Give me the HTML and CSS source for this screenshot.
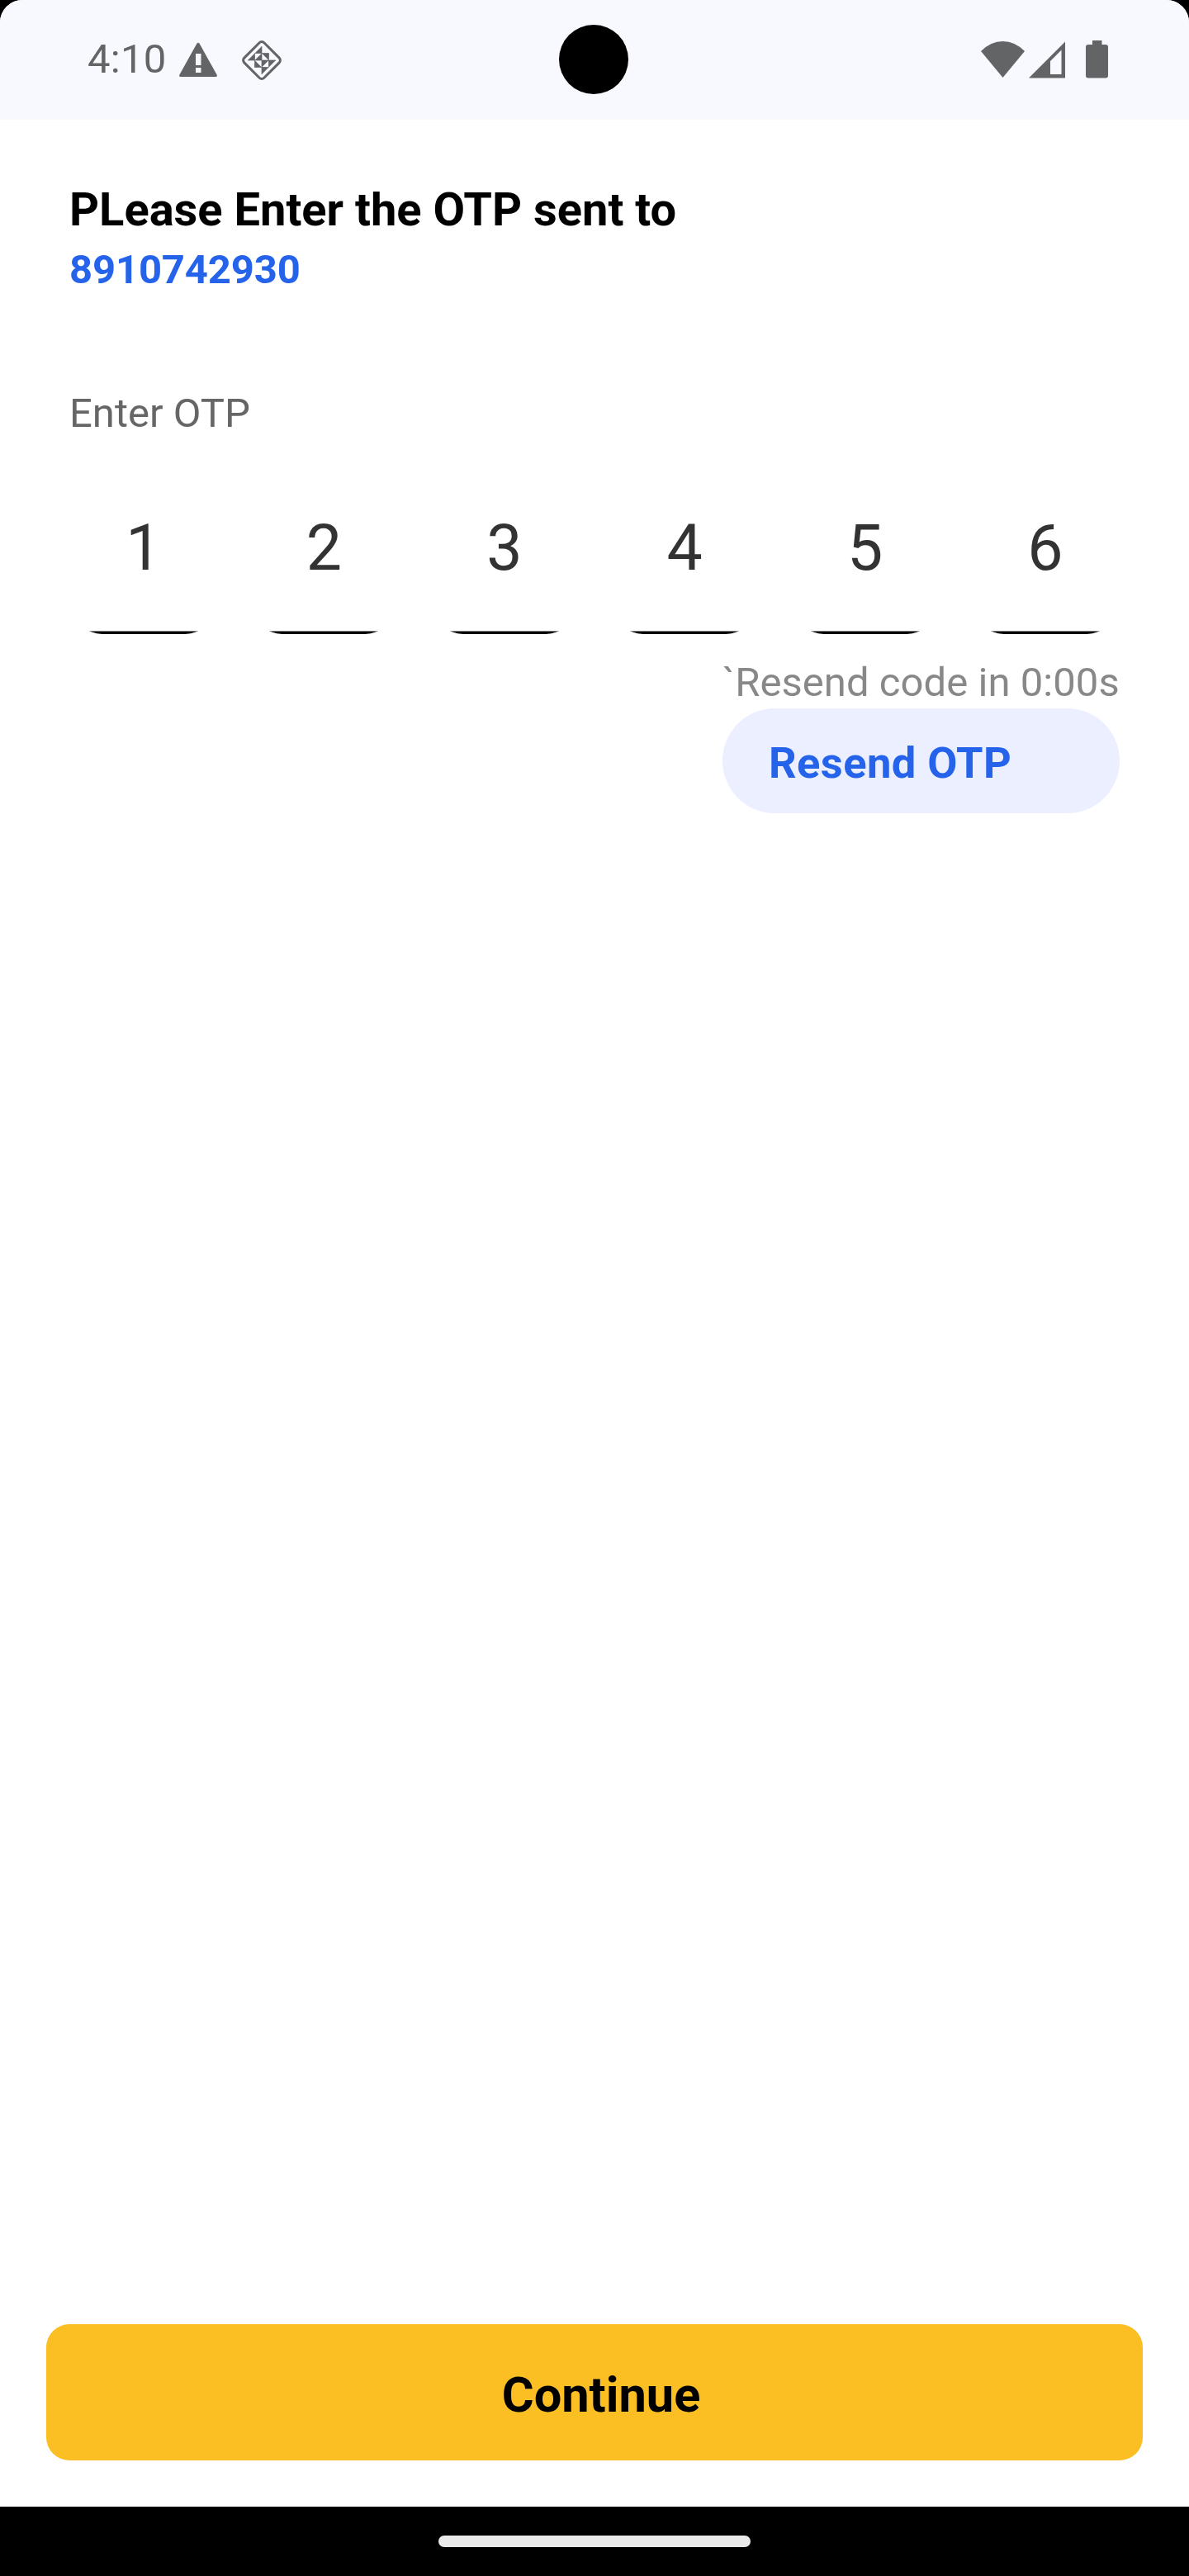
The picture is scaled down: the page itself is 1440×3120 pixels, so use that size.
FILE: index.html
```html
<!DOCTYPE html>
<html lang="en">
<head>
<meta charset="utf-8">
<title>Enter OTP</title>
<link rel="stylesheet" href="styles.css">
</head>
<body>
<div class="screen">
  <header class="status">
    <div class="status-left">
      <span class="clock">4:10</span>
      <svg class="warn" width="48" height="44" viewBox="0 0 48 44"><path fill-rule="evenodd" d="M22.4 1.8Q24 -.3 25.6 1.8L46.600 39.500Q47.500 42 45.500 42H2.500Q.5 42 1.400 39.500ZM21 14V28H27.500V14ZM21 31V37H27.500V31Z"/></svg>
      <svg class="diamond" width="50" height="50" viewBox="0 0 50 50"><rect x="8" y="8" width="34" height="34" rx="4" fill="none" stroke="#626465" stroke-width="3" transform="rotate(45 25 25)"/><path d="M25 8V16.500H16.500ZM8 25L16.500 16.500V25ZM16.500 25L25 16.500V25ZM25 16.500H33.500V25ZM16.500 25V33.500H25ZM25 25H33.500L25 33.500ZM33.500 25H42L33.500 33.500ZM25 33.500H33.500L25 42Z"/><path d="M16.500 16.500H33.500V33.500H16.500ZM25 8V42M8 25H42" fill="none" stroke="#626465" stroke-width=".7"/></svg>
    </div>
    <div class="status-right">
      <svg class="wifi" width="54" height="46" viewBox="0 0 54 46"><path d="M0 13Q12 1 26.500 1T53 13L26.500 45Z"/></svg>
      <svg class="signal" width="45" height="46" viewBox="0 0 45 46"><path fill-rule="evenodd" d="M0 45.500L44 1.500V45.500ZM26 25V41H39.500V11.500Z"/></svg>
      <svg class="battery" width="28" height="46" viewBox="0 0 28 46"><path d="M8 0H19.500V5H24Q27 5 27 8V42.500Q27 45.500 24 45.500H3Q0 45.500 0 42.500V8Q0 5 3 5H8Z"/></svg>
    </div>
    <span class="camera"></span>
  </header>
  <main class="content">
    <h1 class="title">PLease Enter the OTP sent to</h1>
    <p class="phone">8910742930</p>
    <p class="label">Enter OTP</p>
    <div class="otp">
      <span class="digit">1</span><span class="digit">2</span><span class="digit">3</span><span class="digit">4</span><span class="digit">5</span><span class="digit">6</span>
    </div>
    <div class="resend">
      <p class="timer">`Resend code in 0:00s</p>
      <button class="resend-btn">Resend OTP</button>
    </div>
  </main>
  <footer class="actions"><button class="continue">Continue</button></footer>
  <nav class="navbar"><span class="handle"></span></nav>
</div>
</body>
</html>
```
FILE: styles.css
```css
* { box-sizing: border-box; }
body { margin: 0; background: #000; font-family: Roboto, sans-serif; }
h1, p { margin: 0; }
button { border: 0; font-family: inherit; }
.screen { display: flex; flex-direction: column; width: 1440px; height: 3120px; background: #fff; border-radius: 27px 27px 0 0; overflow: hidden; }
.status { position: relative; display: flex; justify-content: space-between; height: 145px; padding: 0 97px 0 106px; background: #f8f9ff; color: #626465; fill: #626465; }
.status-left, .status-right { display: flex; align-items: flex-start; }
.clock { width: 110px; margin-top: 43px; font-size: 49px; line-height: 58px; letter-spacing: .3px; }
.warn { margin-top: 51px; }
.diamond { margin: 48px 0 0 28px; }
.wifi { margin-top: 49px; }
.signal { margin: 49px 0 0 4px; }
.battery { margin: 49px 0 0 24px; }
.camera { position: absolute; left: 677px; top: 30px; width: 84px; height: 84px; border-radius: 50%; background: #000; }
.content { flex: 1; padding: 76px 84px 0; }
.title { font-size: 56px; line-height: 66px; font-weight: 700; color: #000; }
.phone { margin-top: 12px; font-size: 49px; line-height: 56px; font-weight: 700; letter-spacing: -.15px; color: #2563eb; }
.label { margin-top: 117px; font-size: 49px; line-height: 58px; color: #666; }
.otp { display: flex; justify-content: space-between; margin-top: 63px; padding: 0 5px; }
.digit { position: relative; width: 170px; height: 175px; padding-top: 26px; text-align: center; font-size: 77px; line-height: 90px; color: #333; }
.digit::after { content: ""; position: absolute; inset: 0; border-radius: 35px; background: #000; clip-path: inset(171.500px 0 0 0); }
.resend { display: flex; flex-direction: column; width: 481px; margin: 30px 0 0 auto; }
.timer { font-size: 49px; line-height: 58px; letter-spacing: .05px; color: #888; white-space: nowrap; }
.resend-btn { height: 127px; margin-top: 2px; padding: 5px 56px 0; border-radius: 64px; background: #ebefff; color: #2563eb; font-size: 52.500px; font-weight: 700; letter-spacing: .4px; text-align: left; }
.actions { padding: 0 56px 56px; }
.continue { display: block; width: 100%; height: 165px; padding: 6px 0 0 16px; border-radius: 28px; background: #fbbf24; color: #000; font-size: 59.500px; font-weight: 700; }
.navbar { display: flex; justify-content: center; height: 84px; padding-top: 35px; background: #000; }
.handle { width: 378px; height: 14px; border-radius: 7px; background: #eaeaea; }
```
